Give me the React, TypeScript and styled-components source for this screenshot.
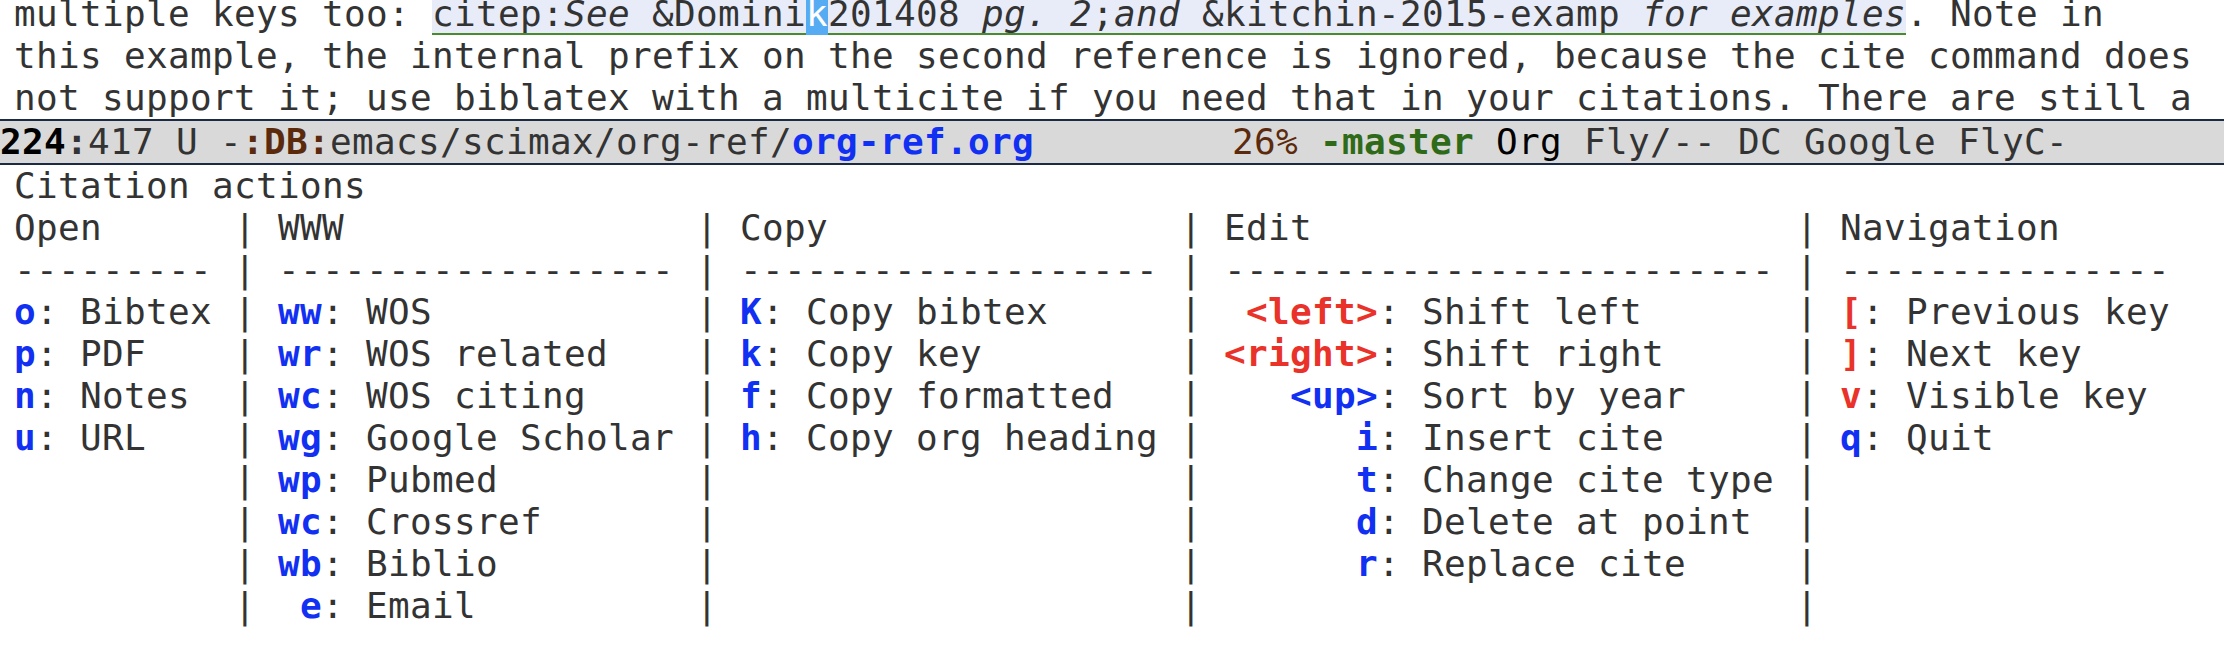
import React from 'react';
import styled, { createGlobalStyle } from 'styled-components';

const CW = 22;
const LH = 42;

const Global = createGlobalStyle`
  html, body { margin: 0; padding: 0; background: #ffffff; }
  body {
    font-family: "DejaVu Sans Mono", "Liberation Mono", monospace;
    font-size: 36px;
    line-height: ${LH}px;
    letter-spacing: 0.326px;
    color: #333333;
  }
`;

const Frame = styled.div`
  width: 2224px;
  height: 666px;
  overflow: hidden;
  background: #ffffff;
`;

const Buffer = styled.div`
  margin-top: -7px;
  padding-left: 14px;
`;

const Line = styled.div`
  height: ${LH}px;
  white-space: pre;
`;

const Cite = styled.span`
  display: inline-block;
  height: ${LH}px;
  background: #e8ecf8;
  box-shadow: inset 0 -2px 0 #4a8b30;
`;

const Ital = styled.span`
  font-style: italic;
`;

const Cursor = styled.span`
  display: inline-block;
  height: ${LH}px;
  background: #56acf2;
  color: #ffffff;
`;

const ModeLine = styled.div`
  height: 42px;
  line-height: 41px;
  background: #d9d9d9;
  border-top: 2px solid #1d2a46;
  border-bottom: 2px solid #1d2a46;
  white-space: pre;
  color: #333333;
`;

const Seg = styled.span<{ $c?: string; $b?: boolean }>`
  color: ${(p) => p.$c || 'inherit'};
  font-weight: ${(p) => (p.$b ? 'bold' : 'normal')};
`;

const Popup = styled.div`
  padding-left: 14px;
`;

const Row = styled.div`
  display: flex;
  height: ${LH}px;
  white-space: pre;
`;

const Cell = styled.div<{ $cols?: number; $lead?: boolean }>`
  flex: ${(p) => (p.$cols ? 'none' : '1')};
  width: ${(p) => (p.$cols ? `${p.$cols * CW}px` : 'auto')};
  padding-left: ${(p) => (p.$lead ? CW : 0)}px;
  box-sizing: border-box;
  overflow: hidden;
`;

const Sep = styled.div`
  flex: none;
  width: ${CW}px;
  text-align: center;
`;

const Key = styled.span<{ $w: number; $red?: boolean }>`
  display: inline-block;
  width: ${(p) => p.$w * CW}px;
  text-align: right;
  font-weight: bold;
  color: ${(p) => (p.$red ? '#e9332a' : '#1230f2')};
`;

type Entry = { k: string; d: string; red?: boolean };
type Column = { title: string; cols?: number; lead: boolean; keyW: number; dashes: number; items: Entry[] };

const columns: Column[] = [
  {
    title: 'Open', cols: 10, lead: false, keyW: 1, dashes: 9,
    items: [
      { k: 'o', d: 'Bibtex' },
      { k: 'p', d: 'PDF' },
      { k: 'n', d: 'Notes' },
      { k: 'u', d: 'URL' },
    ],
  },
  {
    title: 'WWW', cols: 20, lead: true, keyW: 2, dashes: 18,
    items: [
      { k: 'ww', d: 'WOS' },
      { k: 'wr', d: 'WOS related' },
      { k: 'wc', d: 'WOS citing' },
      { k: 'wg', d: 'Google Scholar' },
      { k: 'wp', d: 'Pubmed' },
      { k: 'wc', d: 'Crossref' },
      { k: 'wb', d: 'Biblio' },
      { k: 'e', d: 'Email' },
    ],
  },
  {
    title: 'Copy', cols: 21, lead: true, keyW: 1, dashes: 19,
    items: [
      { k: 'K', d: 'Copy bibtex' },
      { k: 'k', d: 'Copy key' },
      { k: 'f', d: 'Copy formatted' },
      { k: 'h', d: 'Copy org heading' },
    ],
  },
  {
    title: 'Edit', cols: 27, lead: true, keyW: 7, dashes: 25,
    items: [
      { k: '<left>', d: 'Shift left', red: true },
      { k: '<right>', d: 'Shift right', red: true },
      { k: '<up>', d: 'Sort by year' },
      { k: 'i', d: 'Insert cite' },
      { k: 't', d: 'Change cite type' },
      { k: 'd', d: 'Delete at point' },
      { k: 'r', d: 'Replace cite' },
    ],
  },
  {
    title: 'Navigation', lead: true, keyW: 1, dashes: 15,
    items: [
      { k: '[', d: 'Previous key', red: true },
      { k: ']', d: 'Next key', red: true },
      { k: 'v', d: 'Visible key', red: true },
      { k: 'q', d: 'Quit' },
    ],
  },
];

const TableRow: React.FC<{ render: (c: Column) => React.ReactNode }> = ({ render }) => (
  <Row>
    {columns.map((c, i) => (
      <React.Fragment key={c.title}>
        {i > 0 && <Sep>|</Sep>}
        <Cell $cols={c.cols} $lead={c.lead}>{render(c)}</Cell>
      </React.Fragment>
    ))}
  </Row>
);

export default function App() {
  const rows = Array.from({ length: 8 }, (_, i) => i);
  return (
    <Frame>
      <Global />
      <Buffer>
        <Line>
          {'multiple keys too: '}
          <Cite>
            {'citep:'}
            <Ital>See</Ital>
            {' &Domini'}
            <Cursor>k</Cursor>
            {'201408 '}
            <Ital>pg. 2</Ital>
            {';'}
            <Ital>and</Ital>
            {' &kitchin-2015-examp '}
            <Ital>for examples</Ital>
          </Cite>
          {'. Note in'}
        </Line>
        <Line>this example, the internal prefix on the second reference is ignored, because the cite command does</Line>
        <Line>not support it; use biblatex with a multicite if you need that in your citations. There are still a</Line>
      </Buffer>
      <ModeLine>
        <Seg $c="#000000" $b>224</Seg>
        <Seg $b>:</Seg>
        <Seg>417 U -</Seg>
        <Seg $c="#5b2a0c" $b>:DB:</Seg>
        <Seg>emacs/scimax/org-ref/</Seg>
        <Seg $c="#1230f2" $b>org-ref.org</Seg>
        <Seg>{'         '}</Seg>
        <Seg $c="#5b2a0c">26%</Seg>
        <Seg> </Seg>
        <Seg $c="#2f6a18" $b>-master</Seg>
        <Seg> </Seg>
        <Seg $c="#000000">Org</Seg>
        <Seg> Fly/-- DC Google FlyC-</Seg>
      </ModeLine>
      <Popup>
        <Row>Citation actions</Row>
        <TableRow render={(c) => c.title} />
        <TableRow render={(c) => '-'.repeat(c.dashes)} />
        {rows.map((r) => (
          <TableRow
            key={r}
            render={(c) => {
              const it = c.items[r];
              if (!it) return null;
              return (
                <>
                  <Key $w={c.keyW} $red={it.red}>{it.k}</Key>
                  {': ' + it.d}
                </>
              );
            }}
          />
        ))}
      </Popup>
    </Frame>
  );
}
